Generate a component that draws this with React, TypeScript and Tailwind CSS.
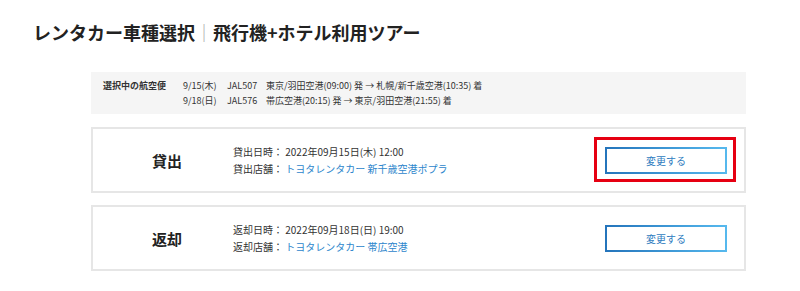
import React from "react";

const flights = [
    { date: "9/15(木)", no: "JAL507", route: "東京/羽田空港(09:00) 発 → 札幌/新千歳空港(10:35) 着" },
    { date: "9/18(日)", no: "JAL576", route: "帯広空港(20:15) 発 → 東京/羽田空港(21:55) 着" },
];

interface RentalCardProps {
    title: string;
    dateLabel: string;
    dateValue: string;
    shopLabel: string;
    shopValue: string;
    highlight?: boolean;
}

const RentalCard = ({ title, dateLabel, dateValue, shopLabel, shopValue, highlight }: RentalCardProps): JSX.Element => {
    return (
        <div className="flex items-center h-[66px] border-2 border-[#e6e6e6] bg-white">
            <h2 className="pl-[59px] w-[140px] text-[15px] font-bold text-[#222] leading-none">{title}</h2>
            <div className="text-[10px] leading-[17px] text-[#333]">
                <p>
                    {dateLabel}： {dateValue}
                </p>
                <p>
                    {shopLabel}： <span className="text-[#2d86cc]">{shopValue}</span>
                </p>
            </div>
            <div className="ml-auto mr-[17px] relative">
                {/* red annotation box */}
                {highlight && (
                    <div className="absolute -left-[11px] -right-[9px] -top-[10px] -bottom-[8px] border-[3px] border-[#e60012]" />
                )}
                <button className="block w-[122px] h-[27px] p-[2px] bg-gradient-to-r from-[#2474bb] to-[#56b9ee]">
                    <span className="flex items-center justify-center w-full h-full bg-white text-[10px] text-[#2f7cc0]">
                        変更する
                    </span>
                </button>
            </div>
        </div>
    );
};

const App = (): JSX.Element => {
    return (
        <div className="w-[800px] h-[291px] bg-white font-['Noto_Sans_CJK_JP',sans-serif] overflow-hidden">
            <h1 className="pl-[33px] pt-[19px] text-[18px] font-bold text-[#222] leading-[26px]">
                レンタカー車種選択<span className="text-[#aaa] font-normal">｜</span>飛行機+ホテル利用ツアー
            </h1>
            <div className="ml-[91px] mt-[27px] w-[655px]">
                {/* flight summary */}
                <div className="flex bg-[#f5f5f5] h-[42px] pl-[12px] pt-[6px] text-[9px] leading-[15px] text-[#333]">
                    <p className="w-[80px] font-bold">選択中の航空便</p>
                    <div>
                        {flights.map((f) => (
                            <div className="flex" key={f.no}>
                                <span className="w-[44px]">{f.date}</span>
                                <span className="w-[39px]">{f.no}</span>
                                <span>{f.route}</span>
                            </div>
                        ))}
                    </div>
                </div>
                <div className="mt-[13px] flex flex-col gap-[12px]">
                    <RentalCard
                        title="貸出"
                        dateLabel="貸出日時"
                        dateValue="2022年09月15日(木) 12:00"
                        shopLabel="貸出店舗"
                        shopValue="トヨタレンタカー 新千歳空港ポプラ"
                        highlight
                    />
                    <RentalCard
                        title="返却"
                        dateLabel="返却日時"
                        dateValue="2022年09月18日(日) 19:00"
                        shopLabel="返却店舗"
                        shopValue="トヨタレンタカー 帯広空港"
                    />
                </div>
            </div>
        </div>
    );
};

export default App;
